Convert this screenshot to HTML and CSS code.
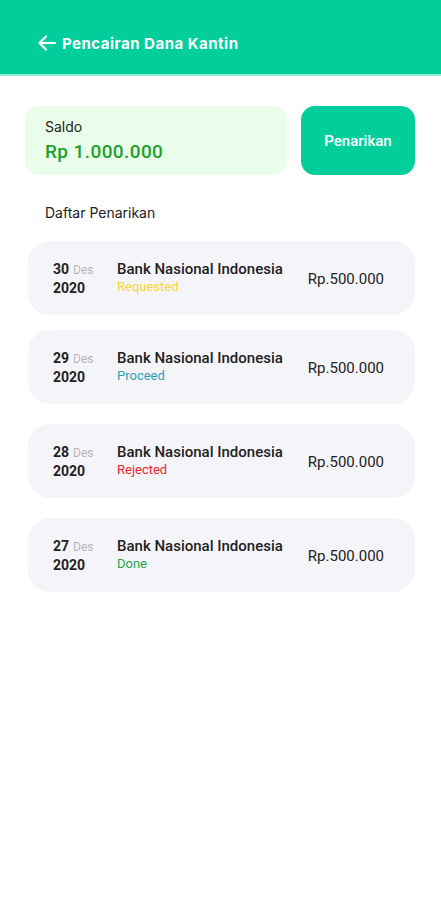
FILE: index.html
```html
<!DOCTYPE html>
<html lang="id">
<head>
<meta charset="utf-8">
<title>Pencairan Dana Kantin</title>
<link rel="stylesheet" href="styles.css">
</head>
<body>
<header class="topbar">
  <svg class="back" width="18" height="16" viewBox="0 0 18 16" aria-hidden="true">
    <path d="M17 8H2M8 1.5L1.5 8 8 14.5" fill="none" stroke="#fff" stroke-width="2.2" stroke-linecap="round" stroke-linejoin="round"/>
  </svg>
  <h1 class="title">Pencairan Dana Kantin</h1>
</header>
<main class="content">
  <section class="summary">
    <div class="saldo">
      <div class="saldo-label">Saldo</div>
      <div class="saldo-amount">Rp 1.000.000</div>
    </div>
    <button class="withdraw">Penarikan</button>
  </section>
  <h2 class="section-title">Daftar Penarikan</h2>
  <ul class="list">
    <li class="item">
      <div class="date"><div><span class="day">30</span> <span class="month">Des</span></div><div class="year">2020</div></div>
      <div class="info"><div class="bank">Bank Nasional Indonesia</div><div class="status requested">Requested</div></div>
      <div class="amount">Rp.500.000</div>
    </li>
    <li class="item">
      <div class="date"><div><span class="day">29</span> <span class="month">Des</span></div><div class="year">2020</div></div>
      <div class="info"><div class="bank">Bank Nasional Indonesia</div><div class="status proceed">Proceed</div></div>
      <div class="amount">Rp.500.000</div>
    </li>
    <li class="item">
      <div class="date"><div><span class="day">28</span> <span class="month">Des</span></div><div class="year">2020</div></div>
      <div class="info"><div class="bank">Bank Nasional Indonesia</div><div class="status rejected">Rejected</div></div>
      <div class="amount">Rp.500.000</div>
    </li>
    <li class="item">
      <div class="date"><div><span class="day">27</span> <span class="month">Des</span></div><div class="year">2020</div></div>
      <div class="info"><div class="bank">Bank Nasional Indonesia</div><div class="status done">Done</div></div>
      <div class="amount">Rp.500.000</div>
    </li>
  </ul>
</main>
</body>
</html>
```
FILE: styles.css
```css
* { box-sizing: border-box; }
html, body { margin: 0; padding: 0; background: #fff; }
body { font-family: Roboto, "Noto Sans", sans-serif; color: #1c1c1c; width: 441px; }

.topbar {
  height: 76px;
  background: #02ce9c;
  border-bottom: 2px solid #8fe9d2;
  display: flex;
  align-items: center;
  padding: 12px 0 0 38px;
  gap: 6px;
}
.back { display: block; flex: none; }
.title {
  margin: 0;
  font-family: Inter, "Noto Sans", sans-serif;
  font-weight: 700;
  font-size: 15px;
  letter-spacing: 0.5px;
  color: #fff;
}

.content { padding: 30px 26px 0 25px; }

.summary { display: flex; gap: 14px; height: 69px; }
.saldo {
  width: 262px;
  background: #eafcea;
  border-radius: 14px;
  padding: 12px 0 0 20px;
}
.saldo-label {
  font-family: Inter, "Noto Sans", sans-serif;
  font-size: 14px;
  color: #222;
  line-height: 18px;
}
.saldo-amount {
  margin-top: 5px;
  font-size: 19px;
  font-weight: 500;
  color: #1ea12d;
  line-height: 22px;
  letter-spacing: 0.4px;
}
.withdraw {
  flex: 1;
  border: 0;
  border-radius: 14px;
  background: #02ce9c;
  color: #fff;
  font-family: Roboto, sans-serif;
  font-weight: 500;
  font-size: 15px;
  padding: 0;
}

.section-title {
  margin: 29px 0 0 20px;
  font-family: Inter, "Noto Sans", sans-serif;
  font-weight: 400;
  font-size: 14px;
  color: #222;
  line-height: 18px;
}

.list {
  list-style: none;
  margin: 19px 0 0 3px;
  padding: 0;
  display: flex;
  flex-direction: column;
  gap: 20px;
}
.item {
  height: 74px;
  background: #f5f5f9;
  border-radius: 22px;
  display: flex;
  align-items: center;
  padding: 0 31px 0 25px;
}
.item:first-child { margin-bottom: -5px; }

.date { width: 64px; line-height: 18px; }
.day { font-weight: 700; font-size: 14px; color: #222; }
.month { font-size: 12px; color: #b5b5b5; }
.year { font-weight: 700; font-size: 14px; color: #222; }

.info { flex: 1; line-height: 18px; }
.bank { font-size: 15px; font-weight: 500; color: #222; }
.status { font-size: 13px; }
.requested { color: #f5d437; }
.proceed { color: #2aa3b5; }
.rejected { color: #e5262b; }
.done { color: #21a64b; }

.amount { font-size: 15px; font-weight: 400; color: #222; margin-top: 1px; }
```
